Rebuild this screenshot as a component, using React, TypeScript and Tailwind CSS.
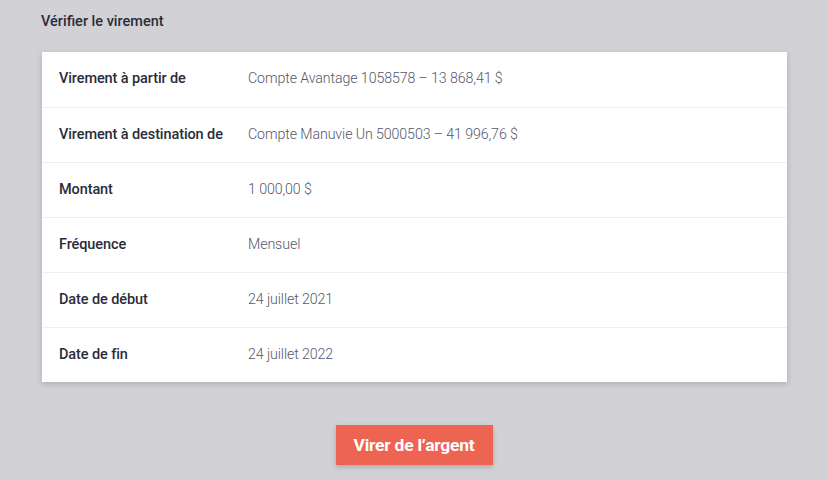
const rows = [
  { label: 'Virement à partir de', value: 'Compte Avantage 1058578 – 13 868,41 $' },
  { label: 'Virement à destination de', value: 'Compte Manuvie Un 5000503 – 41 996,76 $' },
  { label: 'Montant', value: '1 000,00 $' },
  { label: 'Fréquence', value: 'Mensuel' },
  { label: 'Date de début', value: '24 juillet 2021' },
  { label: 'Date de fin', value: '24 juillet 2022' },
];

export default function App() {
  return (
    <div className="w-[828px] h-[480px] overflow-hidden bg-[#d2d1d6] px-[42px] pt-[13px] font-['Roboto',sans-serif]">
      <h1 className="text-[14.5px] font-medium text-[#2a2c3a] leading-[18px] -ml-px">Vérifier le virement</h1>

      <div className="mt-[21px] w-[745px] bg-white shadow-[0_2px_6px_rgba(0,0,0,0.18)]">
        {rows.map((r, i) => (
          <div
            key={r.label}
            className={`flex items-center h-[55px] pl-[17px] ${i > 0 ? 'border-t border-[#efefef]' : 'h-[54px]'}`}
          >
            <div className="w-[189px] shrink-0 text-[14.5px] font-medium text-[#2a2c3a] tracking-[-0.1px] -mt-px">{r.label}</div>
            <div className="text-[14.2px] font-light text-[#55576a] tracking-[-0.1px] -mt-px">{r.value}</div>
          </div>
        ))}
      </div>

      <div className="flex justify-center mt-[43px]">
        <button className="w-[157px] h-[40px] bg-[#ee6452] text-white text-[17.4px] font-bold tracking-[-0.2px] shadow-[0_2px_5px_rgba(0,0,0,0.2)]">
          Virer de l’argent
        </button>
      </div>
    </div>
  );
}
